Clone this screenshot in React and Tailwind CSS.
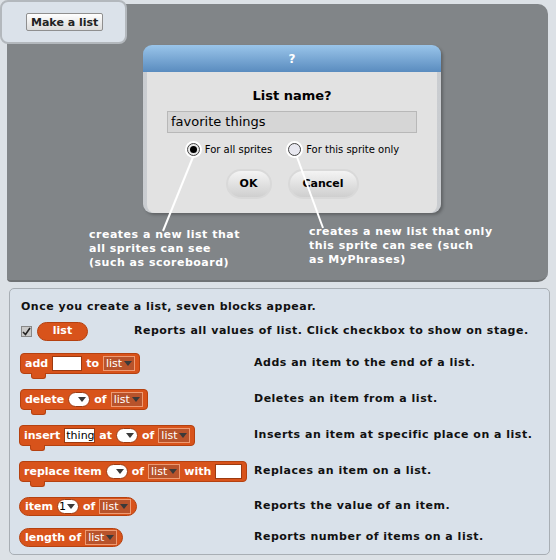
import React from "react";

const ORANGE = "bg-[#d8531b]";

// small dark triangle for dropdowns
const Tri = ({color = "#3a3a3a"}) => (
    <svg width="8" height="5" viewBox="0 0 8 5" className="shrink-0">
        <path d="M0 0 L8 0 L4 5 Z" fill={color}/>
    </svg>
);

const ListDrop = () => (
    <span className="inline-flex items-center gap-[2px] h-[15px] pl-[2px] pr-[2px] bg-[#b8532b] border border-[#ee9a72] text-white font-normal text-[11px] leading-none">
        list
        <Tri/>
    </span>
);

const TextSlot = ({w, children}) => (
    <span className={`inline-flex items-center h-[15px] ${w} bg-white border border-[#9c3a10] text-black font-normal text-[11px] leading-none px-[1px]`}>
        {children}</span>
);

const NumSlot = ({children}) => (
    <span className="inline-flex items-center justify-end gap-[1px] h-[15px] w-[22px] rounded-full bg-white border border-[#9c3a10] text-black font-normal text-[11px] leading-none pr-[3px] pl-[3px]">
        {children}
        <Tri/>
    </span>
);

const Cmd = ({children}) => (
    <div className={`relative inline-flex items-center gap-[4px] h-[21px] pl-[4px] pr-[4px] rounded-[4px] ${ORANGE} border border-[#b54110] text-white font-bold text-[11px] leading-none whitespace-nowrap`}>
        {children}
        <span className={`absolute left-[10px] -bottom-[6px] w-[15px] h-[6px] ${ORANGE} rounded-b-[3px] border-b border-x border-[#b54110]`}/>
    </div>
);

const Reporter = ({children}) => (
    <div className={`inline-flex items-center gap-[4px] h-[19px] pl-[5px] pr-[5px] rounded-full ${ORANGE} border border-[#b54110] text-white font-bold text-[11px] leading-none whitespace-nowrap`}>
        {children}</div>
);

const Row = ({h, descX, block, desc}) => (
    <div className={`flex items-center ${h}`}>
        <div className={`${descX} shrink-0 flex items-center`}>
            {block}</div>
        <span className="text-[11px] font-bold text-[#111] tracking-[0.5px] whitespace-nowrap">
            {desc}</span>
    </div>
);

const App = () => {
    return (
        <div className="relative w-[556px] h-[560px] bg-[#dce1e6] overflow-hidden" style={{fontFamily: '"DejaVu Sans", "Liberation Sans", sans-serif'}}>
            {/* Top gray area */}
            <div className="pt-[4px] pl-[7px]">
                <div className="relative w-[541px] h-[278px] rounded-r-[10px] rounded-bl-[4px] bg-[#818588] border-b-2 border-[#6f7274] pl-[136px] pt-[41px]">
                    {/* dialog */}
                    <div className="w-[298px] h-[168px] rounded-[9px] overflow-hidden shadow-[2px_2px_3px_rgba(0,0,0,0.25)] flex flex-col">
                        <div className="h-[27px] bg-gradient-to-b from-[#9ac5ea] to-[#5a8cbf] flex items-center justify-center text-white text-[12px] font-bold">?</div>
                        <div className="flex-1 bg-gradient-to-r from-[#c9ccd0] via-[#e3e3e3] to-[#c9ccd0] flex flex-col items-center px-[4px]">
                            <div className="w-full flex-1 bg-[#e2e2e2] flex flex-col items-center rounded-b-[8px]">
                                <div className="mt-[17px] text-[13px] font-bold text-black leading-none">List name?</div>
                                <div className="mt-[9px] w-[250px] h-[22px] bg-[#d6d6d6] border border-[#b8b8b8] text-[13px] text-black flex items-center pl-[3px]">favorite things</div>
                                <div className="mt-[8px] flex items-center gap-[14px] text-[10px] text-black">
                                    <div className="flex items-center gap-[3px]">
                                        <span className="w-[17px] h-[17px] rounded-full bg-white flex items-center justify-center">
                                            <span className="w-[13px] h-[13px] rounded-full bg-[#e8e8e8] border border-[#444] flex items-center justify-center">
                                                <span className="w-[7px] h-[7px] rounded-full bg-black"/>
                                            </span>
                                        </span>
                                        For all sprites
                                    </div>
                                    <div className="flex items-center gap-[3px]">
                                        <span className="w-[17px] h-[17px] rounded-full bg-white flex items-center justify-center">
                                            <span className="w-[13px] h-[13px] rounded-full bg-[#e8e8f0] border border-[#444]"/>
                                        </span>
                                        For this sprite only
                                    </div>
                                </div>
                                <div className="mt-[11px] flex items-center gap-[16px]">
                                    <button className="w-[46px] h-[30px] rounded-full bg-gradient-to-b from-[#f4f4f4] to-[#cfcfcf] border-2 border-[#d9d9d9] text-[11px] font-bold text-black">OK</button>
                                    <button className="w-[71px] h-[30px] rounded-full bg-gradient-to-b from-[#f4f4f4] to-[#cfcfcf] border-2 border-[#d9d9d9] text-[11px] font-bold text-black">Cancel</button>
                                </div>
                            </div>
                        </div>
                    </div>

                    {/* pointer lines */}
                    <svg className="absolute left-0 top-0" width="541" height="278">
                        <line x1="186" y1="153" x2="156" y2="227" stroke="white" strokeWidth="2"/>
                        <line x1="290" y1="153" x2="316" y2="224" stroke="white" strokeWidth="2"/>
                    </svg>

                    {/* notes */}
                    <div className="absolute left-[82px] top-[224px] text-white text-[11px] font-bold leading-[14px] tracking-[0.5px]">
                        creates a new list that<br/>all sprites can see<br/>(such as scoreboard)
                    </div>
                    <div className="absolute left-[302px] top-[221px] text-white text-[11px] font-bold leading-[14px] tracking-[0.5px]">
                        creates a new list that only<br/>this sprite can see (such<br/>as MyPhrases)
                    </div>
                </div>
            </div>

            {/* Make a list tab */}
            <div className="absolute left-0 top-0 w-[127px] h-[44px] rounded-[8px] bg-[#dbe2ea] border-2 border-[#b3b8bd] flex items-center pl-[24px]">
                <button className="h-[18px] px-[4px] bg-gradient-to-b from-white to-[#dcdcdc] border border-[#8f8f8f] rounded-[2px] text-[11px] font-bold text-[#222] leading-none">Make a list</button>
            </div>

            {/* bottom info panel */}
            <div className="mt-[6px] ml-[9px] w-[541px] h-[267px] rounded-[5px] bg-[#d9e1ea] border border-[#a8aeb4] pl-[9px] pr-[8px] pt-[10px]">
                <div className="pl-[2px] text-[11px] font-bold text-[#111] tracking-[0.5px] leading-[16px]">Once you create a list, seven blocks appear.</div>

                <div className="mt-[6px] pl-[2px]">
                    <Row h="h-[20px]" descX="w-[113px]"
                        block={
                            <div className="flex items-center gap-[5px]">
                                <span className="w-[11px] h-[11px] bg-[#c9c9c9] border border-[#888] flex items-center justify-center">
                                    <svg width="9" height="9" viewBox="0 0 9 9"><path d="M1 5 L3.5 7.5 L8 1" stroke="#222" strokeWidth="1.6" fill="none"/></svg>
                                </span>
                                <div className={`w-[51px] h-[19px] rounded-full ${ORANGE} border border-[#b54110] text-white font-bold text-[11px] flex items-center justify-center`}>list</div>
                            </div>
                        }
                        desc="Reports all values of list. Click checkbox to show on stage."/>
                </div>

                <div className="mt-[12px] flex flex-col">
                    <Row h="h-[21px]" descX="w-[235px] pl-[1px]"
                        block={<Cmd>add<TextSlot w="w-[30px]"/>to<ListDrop/></Cmd>}
                        desc="Adds an item to the end of a list."/>
                    <div className="h-[15px]"/>
                    <Row h="h-[21px]" descX="w-[235px] pl-[1px]"
                        block={<Cmd>delete<NumSlot/>of<ListDrop/></Cmd>}
                        desc="Deletes an item from a list."/>
                    <div className="h-[15px]"/>
                    <Row h="h-[21px]" descX="w-[235px]"
                        block={<Cmd>insert<TextSlot w="w-[31px]">thing</TextSlot>at<NumSlot/>of<ListDrop/></Cmd>}
                        desc="Inserts an item at specific place on a list."/>
                    <div className="h-[15px]"/>
                    <Row h="h-[21px]" descX="w-[235px]"
                        block={<Cmd>replace item<NumSlot/>of<ListDrop/>with<TextSlot w="w-[27px]"/></Cmd>}
                        desc="Replaces an item on a list."/>
                    <div className="h-[14px]"/>
                    <Row h="h-[20px]" descX="w-[235px]"
                        block={<Reporter>item<NumSlot>1</NumSlot>of<ListDrop/></Reporter>}
                        desc="Reports the value of an item."/>
                    <div className="h-[11px]"/>
                    <Row h="h-[20px]" descX="w-[235px]"
                        block={<Reporter>length of<ListDrop/></Reporter>}
                        desc="Reports number of items on a list."/>
                </div>
            </div>
        </div>
    );
};

export default App;
